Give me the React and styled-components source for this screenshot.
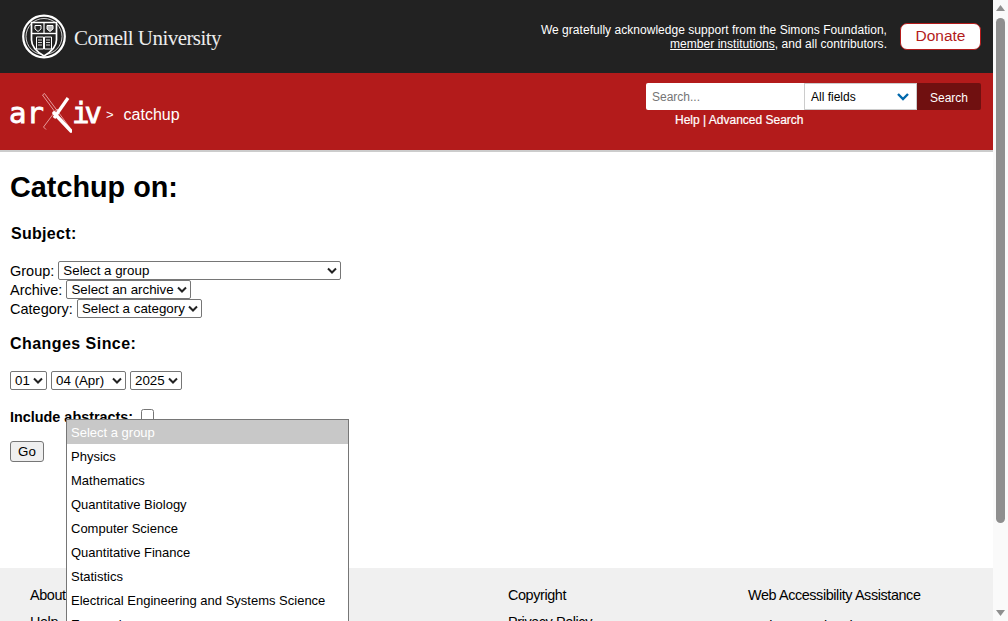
import React from "react";
import styled, { createGlobalStyle } from "styled-components";

const Global = createGlobalStyle`
  html, body { margin: 0; padding: 0; height: 100%; overflow: hidden; background: #fff; }
  body { font-family: "Liberation Sans", Arial, sans-serif; color: #000; }
  * { box-sizing: border-box; }
  a { color: inherit; text-decoration: none; }
`;

const Shell = styled.div`
  position: relative;
  display: flex;
  width: 1008px;
  height: 621px;
  overflow: hidden;
`;
const Page = styled.div`
  flex: 1;
  min-width: 0;
  display: flex;
  flex-direction: column;
  height: 680px;
`;
const Banner = styled.header`
  height: 73px;
  background: #222;
  color: #fff;
  display: flex;
  align-items: center;
  justify-content: space-between;
  padding: 0 12px 0 22px;
`;
const CornellLogo = styled.a`
  display: flex;
  align-items: center;
  gap: 8px;
`;
const CornellName = styled.span`
  font-family: "Liberation Serif", serif;
  font-size: 21px;
  letter-spacing: -0.55px;
  color: #ececec;
  margin-top: 3px;
`;
const Thanks = styled.div`
  display: flex;
  align-items: center;
  gap: 13px;
`;
const ThanksText = styled.p`
  margin: 0;
  text-align: right;
  font-size: 12px;
  line-height: 14px;
  letter-spacing: 0.035px;
  a { text-decoration: underline; }
`;
const Donate = styled.a`
  width: 81px;
  height: 27px;
  background: #fff;
  color: #b31b1b;
  border: 1px solid #b31b1b;
  border-radius: 7px;
  font-size: 15.5px;
  padding-bottom: 1px;
  display: flex;
  align-items: center;
  justify-content: center;
`;
const RedBar = styled.div`
  height: 79px;
  background: #b31b1b;
  border-bottom: 2px solid #ccc;
  color: #fff;
  display: flex;
  justify-content: space-between;
  padding: 10px 12px 0 10px;
`;
const Crumb = styled.div`
  display: flex;
  align-items: center;
  height: 59px;
  margin-top: -10px;
  padding-top: 20px;
  align-self: flex-start;
`;
const ArxivMark = styled.a`
  display: flex;
  align-items: center;
  height: 40px;
  width: 91px;
`;
const ArxivLetters = styled.span`
  font-family: "DejaVu Sans Mono", monospace;
  font-weight: 400;
  font-size: 29px;
  line-height: 40px;
  color: #fff;
  -webkit-text-stroke: 0.8px #fff;
  width: ${(p) => p.$w}px;
  margin-left: ${(p) => p.$lead || 0}px;
  flex: none;
  letter-spacing: ${(p) => p.$track}px;
  white-space: nowrap;
`;
const XMark = styled.svg`
  display: block;
  flex: none;
`;
const Separator = styled.span`
  font-size: 13px;
  margin: 4px 10px 0 5px;
`;
const CrumbPage = styled.span`
  font-size: 16px;
  margin-top: 4px;
`;
const SearchBlock = styled.div`
  width: 335px;
  display: flex;
  flex-direction: column;
`;
const SearchRow = styled.form`
  display: flex;
  height: 27px;
`;
const SearchInput = styled.div`
  width: 158px;
  background: #fff;
  border-radius: 2px 0 0 2px;
  color: #757575;
  font-size: 12px;
  line-height: 29px;
  padding-left: 6px;
`;
const FieldSelect = styled.div`
  width: 113px;
  background: #fff;
  border: 1px solid #ccc;
  color: #000;
  font-size: 12px;
  display: flex;
  align-items: center;
  justify-content: space-between;
  padding: 0 6px;
`;
const SearchButton = styled.button`
  flex: 1;
  background: #701010;
  color: #fff;
  border: 0;
  border-radius: 0 2px 2px 0;
  font: 12px "Liberation Sans", Arial, sans-serif;
  padding: 2px 0 0;
`;
const SearchLinks = styled.div`
  width: 158px;
  margin-top: 3px;
  padding-left: 29px;
  white-space: nowrap;
  font-size: 12px;
  line-height: 14px;
  -webkit-text-stroke: 0.2px #fff;
`;
const Main = styled.main`
  flex: 1;
  padding: 0 10px;
`;
const Title = styled.h1`
  margin: 18px 0 0;
  font-size: 28.8px;
  line-height: 34px;
  font-weight: 700;
`;
const SubjectHead = styled.h2`
  margin: 20px 0 0 1px;
  font-size: 16px;
  line-height: 20px;
  font-weight: 700;
  letter-spacing: 0.3px;
`;
const Fieldset = styled.div`
  margin-top: 17px;
  display: flex;
  flex-direction: column;
`;
const Line = styled.div`
  display: flex;
  align-items: center;
  height: 19px;
  font-size: 14.5px;
  gap: 4px;
`;
const NativeLike = styled.div`
  width: ${(p) => p.$w}px;
  height: 19px;
  border: 1px solid #767676;
  border-radius: 2px;
  background: #fff;
  font-size: 13.33px;
  line-height: 17px;
  padding-left: 4px;
  position: relative;
  white-space: nowrap;
  flex: none;
  svg { position: absolute; right: 2px; top: 5px; }
`;
const ChangesHead = styled.h2`
  margin: 16px 0 0;
  font-size: 16px;
  line-height: 20px;
  font-weight: 700;
  letter-spacing: 0.45px;
`;
const DateRow = styled.div`
  margin-top: 17px;
  display: flex;
  gap: 4px;
`;
const AbstractRow = styled.div`
  margin-top: 18px;
  display: flex;
  align-items: center;
  gap: 8px;
  font-size: 14.4px;
  font-weight: 700;
  height: 18px;
`;
const Check = styled.span`
  width: 13px;
  height: 13px;
  border: 1px solid #767676;
  border-radius: 2.5px;
  background: #fff;
  margin-bottom: 4px;
`;
const GoButton = styled.button`
  display: block;
  margin-top: 15px;
  width: 34px;
  height: 21px;
  background: #efefef;
  border: 1px solid #767676;
  border-radius: 3px;
  font: 13.33px "Liberation Sans", Arial, sans-serif;
  padding: 0;
`;
const Footer = styled.footer`
  height: 112px;
  background: #f0f0f0;
  display: flex;
  padding: 15px 0 0 30px;
  font-size: 14.4px;
  letter-spacing: -0.4px;
`;
const FooterCol = styled.ul`
  width: ${(p) => p.$w}px;
  list-style: none;
  margin: 0;
  padding: 0;
  flex: none;
`;
const FooterItem = styled.li`
  height: ${(p) => p.$h || 27}px;
  line-height: 22px;
  padding-top: ${(p) => p.$top || 0}px;
  display: flex;
  align-items: center;
  gap: 3px;
  white-space: nowrap;
`;
const Menu = styled.ul`
  position: absolute;
  left: 66px;
  top: 419px;
  width: 283px;
  height: 240px;
  margin: 0;
  padding: 0;
  list-style: none;
  background: #fff;
  border: 1px solid #767676;
  font-size: 13px;
`;
const MenuItem = styled.li`
  height: 24px;
  line-height: 25px;
  padding-left: 4px;
  white-space: nowrap;
  background: ${(p) => (p.$selected ? "#c8c8c8" : "transparent")};
  color: ${(p) => (p.$selected ? "#fff" : "#000")};
`;
const Scrollbar = styled.aside`
  width: 15px;
  flex: none;
  height: 100%;
  background: #fafafa;
  display: flex;
  flex-direction: column;
  align-items: center;
  justify-content: space-between;
  padding: 5px 0 5px;
  position: relative;
`;
const Thumb = styled.div`
  position: absolute;
  left: 3px;
  top: 18px;
  width: 9px;
  height: 505px;
  border-radius: 5px;
  background: #8f8f8f;
`;
const StatusDot = styled.svg`
  flex: none;
  margin-left: 2px;
`;

const Chevron = () => (
  <svg width="12" height="8" viewBox="0 0 12 8" fill="none">
    <path d="M2 1.5 L6 5.5 L10 1.5" stroke="#222" strokeWidth="2" />
  </svg>
);

const groups = [
  "Physics",
  "Mathematics",
  "Quantitative Biology",
  "Computer Science",
  "Quantitative Finance",
  "Statistics",
  "Electrical Engineering and Systems Science",
  "Economics",
];

const Seal = () => (
  <svg width="44" height="45" viewBox="0 0 44 45" fill="none" stroke="#fff">
    <circle cx="22" cy="22.5" r="20.8" strokeWidth="2.2" />
    <circle cx="22" cy="22.5" r="18" strokeWidth="0.8" />
    <path d="M9.5 8.5 H34.5 V26 C34.5 34 28 38.5 22 42 C16 38.5 9.5 34 9.5 26 Z" strokeWidth="1.7" fill="#222" />
    <path d="M9.5 19.5 H34.5" strokeWidth="1.4" />
    <path d="M22 8.5 V19.5" strokeWidth="1.2" />
    <path d="M13 11.5 H19 V15 L16 17.5 L13 15 Z" strokeWidth="1" />
    <path d="M25 11.5 H31 V15 L28 17.5 L25 15 Z" strokeWidth="1" fill="#bbb" />
    <path d="M14.5 23 H21.5 V35 H14.5 Z M22.5 23 H29.5 V35 H22.5 Z" strokeWidth="1" />
    <path d="M16 26 H20 M16 28.5 H20 M16 31 H20 M24 26 H28 M24 28.5 H28 M24 31 H28" strokeWidth="0.8" />
  </svg>
);

const ArxivX = () => (
  <XMark width="30" height="40" viewBox="0 0 30 40" fill="none">
    <path d="M0.5 2 L2.5 0.5 L28 35 L26 36.5 Z" stroke="#eba9a9" strokeWidth="0.9" />
    <path d="M4 36.5 L1.5 34 L15 16 L18 19" stroke="#eba9a9" strokeWidth="0.9" />
    <path d="M26 5 L12 25" stroke="#fff" strokeWidth="3.2" />
    <path d="M12 20 L29 38" stroke="#fff" strokeWidth="3.6" strokeLinecap="round" />
  </XMark>
);

export default function App() {
  return (
    <Shell>
      <Global />
      <Page>
        <Banner>
          <CornellLogo href="#">
            <Seal />
            <CornellName>Cornell University</CornellName>
          </CornellLogo>
          <Thanks>
            <ThanksText>
              We gratefully acknowledge support from the Simons Foundation,
              <br />
              <a href="#">member institutions</a>, and all contributors.
            </ThanksText>
            <Donate href="#">Donate</Donate>
          </Thanks>
        </Banner>
        <RedBar>
          <Crumb>
            <ArxivMark href="#">
              <ArxivLetters $w={33} $lead={-1} $track={0}>ar</ArxivLetters>
              <ArxivX />
              <ArxivLetters $w={29} $track={-5}>iv</ArxivLetters>
            </ArxivMark>
            <Separator>&gt;</Separator>
            <CrumbPage>catchup</CrumbPage>
          </Crumb>
          <SearchBlock>
            <SearchRow>
              <SearchInput>Search...</SearchInput>
              <FieldSelect>
                All fields
                <svg width="14" height="9" viewBox="0 0 14 9" fill="none">
                  <path d="M2 2 L7 7 L12 2" stroke="#0068ac" strokeWidth="2.4" />
                </svg>
              </FieldSelect>
              <SearchButton type="button">Search</SearchButton>
            </SearchRow>
            <SearchLinks>
              <a href="#">Help</a> | <a href="#">Advanced Search</a>
            </SearchLinks>
          </SearchBlock>
        </RedBar>
        <Main>
          <Title>Catchup on:</Title>
          <SubjectHead>Subject:</SubjectHead>
          <Fieldset>
            <Line>
              Group:
              <NativeLike $w={283}>Select a group<Chevron /></NativeLike>
            </Line>
            <Line>
              Archive:
              <NativeLike $w={125}>Select an archive<Chevron /></NativeLike>
            </Line>
            <Line>
              Category:
              <NativeLike $w={125}>Select a category<Chevron /></NativeLike>
            </Line>
          </Fieldset>
          <ChangesHead>Changes Since:</ChangesHead>
          <DateRow>
            <NativeLike $w={37}>01<Chevron /></NativeLike>
            <NativeLike $w={75}>04 (Apr)<Chevron /></NativeLike>
            <NativeLike $w={52}>2025<Chevron /></NativeLike>
          </DateRow>
          <AbstractRow>
            Include abstracts:
            <Check />
          </AbstractRow>
          <GoButton type="button">Go</GoButton>
        </Main>
        <Footer>
          <FooterCol $w={239}>
            <FooterItem $h={24}>About</FooterItem>
            <FooterItem $top={3}>Help</FooterItem>
          </FooterCol>
          <FooterCol $w={239}>
            <FooterItem $h={24}>Contact</FooterItem>
            <FooterItem $top={3}>Subscribe</FooterItem>
          </FooterCol>
          <FooterCol $w={240}>
            <FooterItem $h={24}>Copyright</FooterItem>
            <FooterItem $top={3}>Privacy Policy</FooterItem>
          </FooterCol>
          <FooterCol $w={240}>
            <FooterItem $h={24}>Web Accessibility Assistance</FooterItem>
            <FooterItem $h={30} $top={8}>
              arXiv Operational Status
              <StatusDot width="9" height="9" viewBox="0 0 9 9">
                <circle cx="4.5" cy="4.5" r="4.5" fill="#aaa" />
              </StatusDot>
            </FooterItem>
          </FooterCol>
        </Footer>
      </Page>
      <Scrollbar>
        <svg width="9" height="6" viewBox="0 0 9 6"><path d="M0 6 L4.5 0 L9 6 Z" fill="#8f8f8f" /></svg>
        <Thumb />
        <svg width="9" height="6" viewBox="0 0 9 6"><path d="M0 0 L4.5 6 L9 0 Z" fill="#8f8f8f" /></svg>
      </Scrollbar>
      <Menu>
        <MenuItem $selected>Select a group</MenuItem>
        {groups.map((g) => (
          <MenuItem key={g}>{g}</MenuItem>
        ))}
      </Menu>
    </Shell>
  );
}
